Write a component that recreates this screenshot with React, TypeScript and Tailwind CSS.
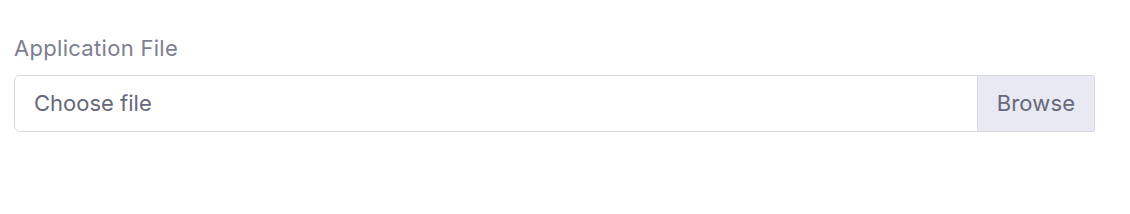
export default function App() {
  return (
    <div className="bg-white w-[1130px] h-[214px] px-[14px] pt-[33px]" style={{ fontFamily: 'Inter, "Liberation Sans", sans-serif' }}>
      <label className="block text-[22px] leading-[30px] tracking-[0.3px] text-[#7d7e8f] mb-[12px]">Application File</label>
      <div className="flex w-[1081px] h-[57px] border border-[#d8d9e3] rounded-l-[6px] rounded-r-[2px] overflow-hidden">
        <div className="flex-1 flex items-center pl-[19px] text-[22px] text-[#676879]">Choose file</div>
        <div className="w-[117px] flex items-center justify-center bg-[#e9e9f4] border-l border-[#d8d9e3] text-[22px] tracking-[0.2px] text-[#676879]">
          Browse
        </div>
      </div>
    </div>
  )
}
